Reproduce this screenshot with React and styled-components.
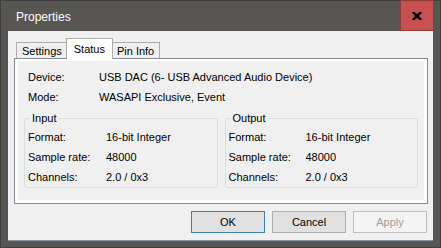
import React from 'react';
import styled, { createGlobalStyle } from 'styled-components';

const Global = createGlobalStyle`
  html, body { margin: 0; padding: 0; background: #fff; }
  body { font-family: 'Liberation Sans', Arial, sans-serif; font-size: 11px; color: #000; }
  * { box-sizing: border-box; }
`;

const Window = styled.div`
  width: 441px;
  height: 248px;
  border: 1px solid #3d3d3d;
  background: #585652;
  display: flex;
  flex-direction: column;
`;

const TitleBar = styled.div`
  height: 30px;
  flex: none;
  display: flex;
  align-items: center;
  justify-content: space-between;
  padding-left: 15px;
`;

const Title = styled.div`
  color: #fff;
  font-size: 12px;
  margin-top: 1px;
`;

const Close = styled.div`
  align-self: flex-start;
  margin-top: -1px;
  margin-right: 6px;
  width: 34px;
  height: 31px;
  background: #c75050;
  border: 1px solid #8f3b35;
  display: flex;
  align-items: center;
  justify-content: center;
`;

const Client = styled.div`
  flex: 1;
  margin: 0 7px 7px;
  background: #f0f0f0;
  padding: 7px 5px 7px 6px;
  display: flex;
  flex-direction: column;
  box-shadow: 0 1px 0 #8593a3;
`;

const TabStrip = styled.div`
  height: 20px;
  flex: none;
  display: flex;
  align-items: flex-end;
  padding-left: 2px;
`;

const Tab = styled.div`
  height: ${p => (p.$active ? '21px' : '16px')};
  margin: 0 ${p => (p.$active ? '-2px' : '0')} ${p => (p.$active ? '-1px' : '0')};
  padding: 0 ${p => (p.$active ? '7px' : '5px')};
  border: 1px solid #acacac;
  border-bottom: none;
  background: ${p => (p.$active ? '#fff' : '#f0f0f0')};
  position: relative;
  z-index: ${p => (p.$active ? 2 : 0)};
  display: flex;
  align-items: center;
  white-space: nowrap;
`;

const Panel = styled.div`
  height: 146px;
  flex: none;
  border: 1px solid #898c95;
  background: #fff;
  padding: 2px 3px 3px;
`;

const PanelInner = styled.div`
  height: 100%;
  background: #f0f0f0;
  padding: 6px 6px 0;
`;

const InfoGrid = styled.div`
  display: grid;
  grid-template-columns: ${p => p.$label}px 1fr;
  grid-auto-rows: 20px;
  align-items: center;
  padding-left: ${p => p.$indent || 0}px;
  white-space: nowrap;
`;

const Groups = styled.div`
  display: grid;
  grid-template-columns: 1fr 1fr;
  gap: 7px;
  margin-top: 4px;
`;

const Group = styled.fieldset`
  margin: 0;
  min-width: 0;
  padding: 2px 3px 0;
  border: 1px solid #d5dfe5;
  border-radius: 3px;
`;

const Legend = styled.legend`
  padding: 0 2px;
  margin-left: 2px;
  line-height: 14px;
  font-size: 11px;
`;

const ButtonRow = styled.div`
  display: flex;
  justify-content: flex-end;
  gap: 7px;
  margin-top: 7px;
  padding-right: 1px;
`;

const Button = styled.button`
  width: 74px;
  height: 22px;
  margin: 0;
  padding: 0;
  font-family: inherit;
  font-size: 11px;
  color: ${p => (p.disabled ? '#a0a0a0' : '#000')};
  background: ${p => (p.disabled ? '#f4f4f4' : '#e1e1e1')};
  border: 1px solid ${p => (p.$default ? '#3c7fb1' : p.disabled ? '#bfbfbf' : '#adadad')};
  border-radius: 0;
`;

function Fields({ rows, label, indent }) {
  return (
    <InfoGrid $label={label} $indent={indent}>
      {rows.map(([k, v]) => (
        <React.Fragment key={k}>
          <span>{k}</span>
          <span>{v}</span>
        </React.Fragment>
      ))}
    </InfoGrid>
  );
}

const streamRows = [
  ['Format:', '16-bit Integer'],
  ['Sample rate:', '48000'],
  ['Channels:', '2.0 / 0x3'],
];

export default function App() {
  return (
    <>
      <Global />
      <Window>
        <TitleBar>
          <Title>Properties</Title>
          <Close>
            <svg width="10" height="8" viewBox="0 0 10 8">
              <path d="M0.8 0 L9.2 8 M9.2 0 L0.8 8" stroke="#000" strokeWidth="2.6" fill="none" />
            </svg>
          </Close>
        </TitleBar>
        <Client>
          <TabStrip>
            <Tab>Settings</Tab>
            <Tab $active>Status</Tab>
            <Tab>Pin Info</Tab>
          </TabStrip>
          <Panel>
            <PanelInner>
              <Fields
                label={71}
                indent={4}
                rows={[
                  ['Device:', 'USB DAC (6- USB Advanced Audio Device)'],
                  ['Mode:', 'WASAPI Exclusive, Event'],
                ]}
              />
              <Groups>
                <Group>
                  <Legend>Input</Legend>
                  <Fields label={78} rows={streamRows} />
                </Group>
                <Group>
                  <Legend>Output</Legend>
                  <Fields label={77} rows={streamRows} />
                </Group>
              </Groups>
            </PanelInner>
          </Panel>
          <ButtonRow>
            <Button $default>OK</Button>
            <Button>Cancel</Button>
            <Button disabled>Apply</Button>
          </ButtonRow>
        </Client>
      </Window>
    </>
  );
}
